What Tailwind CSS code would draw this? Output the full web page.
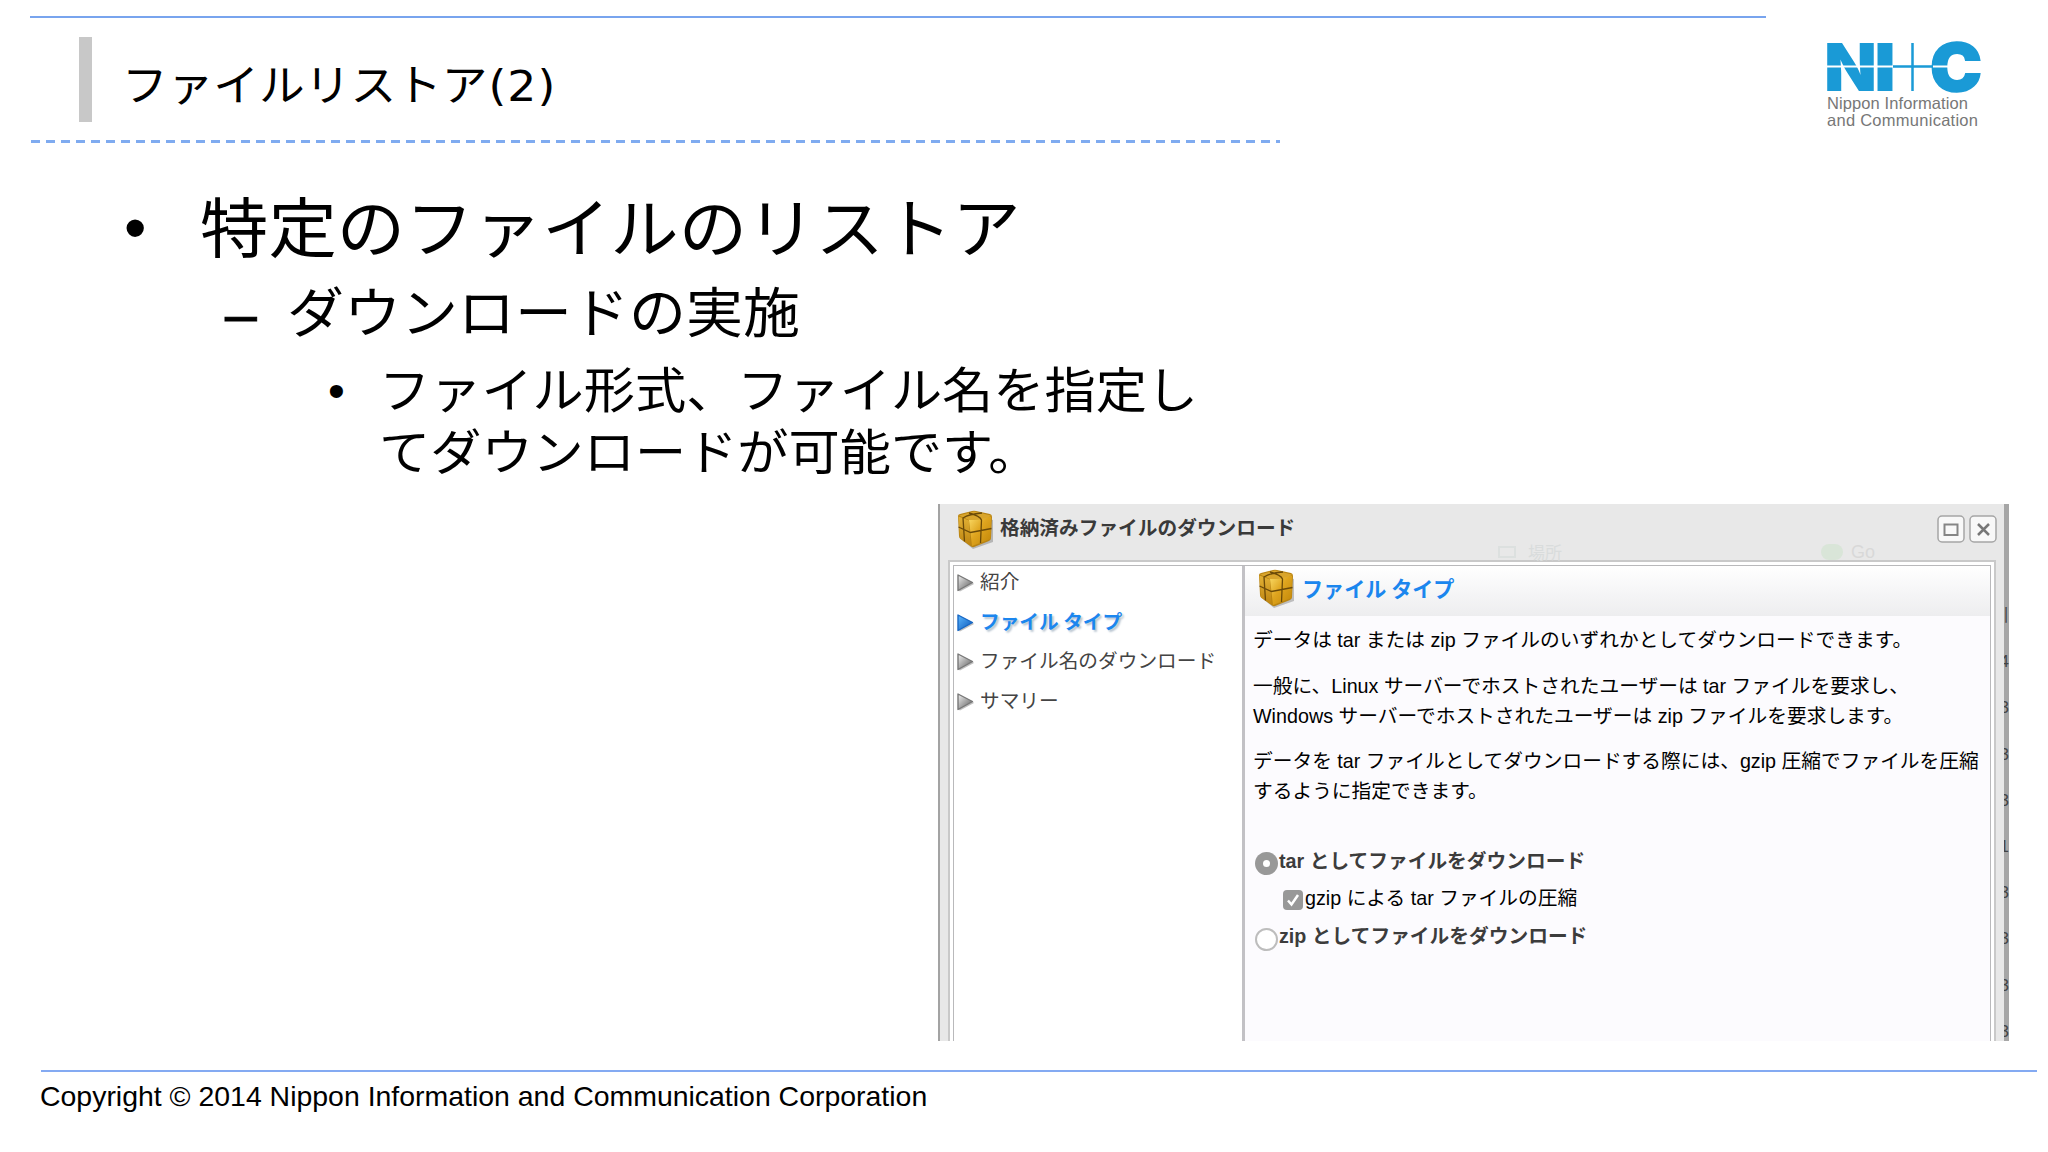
<!DOCTYPE html>
<html lang="ja">
<head>
    <meta charset="UTF-8">
    <meta name="viewport" content="width=device-width, initial-scale=1.0">
    <title>ファイルリストア(2)</title>
    <script src="https://cdn.jsdelivr.net/npm/@tailwindcss/browser@4"></script>
</head>
<body class="bg-white w-[2048px] h-[1152px] overflow-hidden text-black font-['Noto_Sans_CJK_JP',sans-serif]">
    <!-- shared icons -->
    <svg class="absolute size-0">
        <defs>
            <linearGradient id="boxLeft" x1="0" y1="0" x2="0" y2="1">
                <stop offset="0" stop-color="#e2b136"/><stop offset="1" stop-color="#bd8410"/>
            </linearGradient>
            <linearGradient id="boxRight" x1="0" y1="0" x2="1" y2="1">
                <stop offset="0" stop-color="#fbdc68"/><stop offset=".45" stop-color="#dfa51f"/><stop offset="1" stop-color="#c08507"/>
            </linearGradient>
            <linearGradient id="arrowGray" x1="0" y1="0" x2="1" y2="1">
                <stop offset="0" stop-color="#f0f0f0"/><stop offset="1" stop-color="#5a5a5a"/>
            </linearGradient>
            <linearGradient id="arrowBlue" x1="0" y1="0" x2="1" y2="1">
                <stop offset="0" stop-color="#5cb8ff"/><stop offset="1" stop-color="#0a55b8"/>
            </linearGradient>
            <symbol id="package" viewBox="0 0 36 39">
                <path d="M5 30 L16 39 L36 32 L36 10 L30 8z" fill="#000" opacity=".22"/>
                <path d="M1 6 Q1 4.500 3 4 L15 1 Q17 .5 19 1 L33 4 Q35 4.500 35 7 L34 28 Q34 30 32 31 L17 37 Q15.500 37.500 14 36.500 L3.500 29 Q2 28 2 26z" fill="#b98412"/>
                <path d="M2 5.500 L17 1.500 L34 5.500 L30 9 L12 10z" fill="#d9a52c"/>
                <path d="M1.500 6.500 L12 10.500 L13.500 35.500 L3 28z" fill="url(#boxLeft)"/>
                <path d="M12 10 Q24 10 34 6.500 L33.500 29 L15 36z" fill="url(#boxRight)"/>
                <path d="M1.500 17 L13.500 22.500 L34.500 18.500 M23.500 33 L24.500 10 Q23 6 12 3 M7.500 31.500 L6 8 Q12 4 25 3" fill="none" stroke="#6b4a08" stroke-width="1.300"/>
            </symbol>
            <symbol id="arrow" viewBox="0 0 17 18">
                <path d="M3 17.500 L17 10 L15 8 L1 16z" fill="#000" opacity=".25" stroke="none"/>
                <path d="M1 1 L15.500 8.500 L1 16.500z" stroke-width="1.400" stroke-linejoin="round"/>
            </symbol>
        </defs>
    </svg>

    <header>
        <div class="h-4"></div>
        <div class="ml-[30px] w-[1736px] h-[2px] bg-[#78a4ee]"></div>
        <div class="flex h-[122px]">
            <div class="ml-[79px] mt-[19px] w-[13px] h-[85px] bg-[#c8c8c8]"></div>
            <h1 class="ml-[30px] mt-[24px] h-[80px] leading-[80px] text-[45.700px] whitespace-nowrap scale-y-95">ファイルリストア<span class="ml-px tracking-[1px] font-['DejaVu_Sans',sans-serif]">(2)</span></h1>
            <svg class="ml-auto mr-[64px] mt-[18px] w-[164px] h-[96px] overflow-visible" viewBox="1820 36 164 96">
                <g fill="#1a9ad6" font-family="Inter" font-weight="900" font-size="66">
                    <text x="1824" y="91" textLength="53" lengthAdjust="spacingAndGlyphs">N</text>
                    <text x="1874" y="91" textLength="22" lengthAdjust="spacingAndGlyphs">I</text>
                    <text x="1930" y="91" textLength="52" lengthAdjust="spacingAndGlyphs" stroke="#1a9ad6" stroke-width="1.500">C</text>
                </g>
                <path d="M1826 66.500 H1893 M1933 66.500 H1948" stroke="#fff" stroke-width="2"/>
                <path d="M1893 66.500 H1933 M1912.500 43 V91" stroke="#1a9ad6" stroke-width="2.500"/>
                <g fill="#777" font-family="Liberation Sans" font-size="16.500">
                    <text x="1827" y="109" textLength="141">Nippon Information</text>
                    <text x="1827" y="126" textLength="151">and Communication</text>
                </g>
            </svg>
        </div>
        <div class="ml-[31px] w-[1249px] h-[3px] bg-[repeating-linear-gradient(90deg,#7fabf0_0_9px,transparent_9px_15px)]"></div>
    </header>

    <main>
        <ul class="whitespace-nowrap">
            <li class="flex mt-[36px] h-[90px] leading-[90px] text-[68.4px]">
                <span class="ml-[124px] mt-[4px] w-[76px] text-[64px] font-['Liberation_Sans',sans-serif]">•</span>
                <p class="scale-y-95">特定のファイルのリストア</p>
            </li>
            <li class="flex mt-[2px] h-[76px] leading-[76px] text-[57px]">
                <span class="ml-[225px] mt-[5px] w-[62px] font-['Liberation_Sans',sans-serif] [-webkit-text-stroke:1px_black]">–</span>
                <p class="scale-y-95">ダウンロードの実施</p>
            </li>
            <li class="flex mt-[9px] h-[124px] leading-[62px] text-[51.2px]">
                <span class="ml-[328px] mt-[4px] w-[51px] text-[48px] font-['Liberation_Sans',sans-serif]">•</span>
                <div>
                    <p class="scale-y-95">ファイル形式、ファイル名を指定し</p>
                    <p class="scale-y-95">てダウンロードが可能です。</p>
                </div>
            </li>
        </ul>

        <!-- download dialog -->
        <section class="relative ml-[938px] mt-[24px] w-[1071px] h-[537px] bg-[#e8e8e8] border-l-2 border-[#a3a3a3] overflow-hidden text-[19.680px] whitespace-nowrap">
            <div class="flex h-[56px] text-[#3a3a3a]">
                <svg class="ml-[17px] mt-[6px] w-[36px] h-[39px]"><use href="#package"/></svg>
                <h2 class="ml-[7px] h-[46px] leading-[46px] text-[19.7px] font-bold">格納済みファイルのダウンロード</h2>
                <div class="ml-auto mr-[12px] mt-[11px] flex gap-1">
                    <svg class="w-[28px] h-[28px]" viewBox="0 0 28 28">
                        <rect x="1" y="1" width="26" height="26" rx="4" fill="#f8f8f8" stroke="#a5a5a5" stroke-width="1.500"/>
                        <path d="M7.500 9.500 H20.500 V20 H7.500z" fill="none" stroke="#858585" stroke-width="2"/>
                    </svg>
                    <svg class="w-[28px] h-[28px]" viewBox="0 0 28 28">
                        <rect x="1" y="1" width="26" height="26" rx="4" fill="#f8f8f8" stroke="#a5a5a5" stroke-width="1.500"/>
                        <path d="M9 9 L20 20 M20 9 L9 20" stroke="#777" stroke-width="2.500"/>
                    </svg>
                </div>
            </div>

            <!-- page behind shining through the title bar -->
            <div class="absolute left-[558px] top-[39px] flex items-center h-[18px] text-[17px] leading-[18px] text-[#d9dcdc]">
                <span class="w-[18px] h-[12px] border-2 border-[#dce0df] mr-3"></span>場所
            </div>
            <div class="absolute left-[881px] top-[39px] flex items-center h-[18px] text-[18px] leading-[18px] text-[#d8d8d8] font-['Liberation_Sans',sans-serif]">
                <span class="w-[22px] h-[16px] rounded-full bg-[#d9e5d8] mr-2"></span>Go
            </div>

            <div class="ml-[8px] w-[1048px] h-[490px] border-2 border-[#c9c9c9] bg-white p-[3px]">
                <div class="flex h-[490px] border border-[#b9b9bb]">
                    <nav class="w-[288px] text-[#444]">
                        <a class="flex h-[39.700px] leading-[30px]"><svg class="ml-[3px] mt-[8px] w-[17px] h-[18px] fill-[url(#arrowGray)] stroke-[#777]"><use href="#arrow"/></svg><span class="ml-[6px]">紹介</span></a>
                        <a class="flex h-[39.700px] leading-[30px] font-bold text-[#1b86ee]"><svg class="ml-[3px] mt-[8px] w-[17px] h-[18px] fill-[url(#arrowBlue)] stroke-[#1767c4]"><use href="#arrow"/></svg><span class="ml-[6px] [text-shadow:2px_2px_2px_#b8c4d0]">ファイル タイプ</span></a>
                        <a class="flex h-[39.700px] leading-[30px]"><svg class="ml-[3px] mt-[8px] w-[17px] h-[18px] fill-[url(#arrowGray)] stroke-[#777]"><use href="#arrow"/></svg><span class="ml-[6px]">ファイル名のダウンロード</span></a>
                        <a class="flex h-[39.700px] leading-[30px]"><svg class="ml-[3px] mt-[8px] w-[17px] h-[18px] fill-[url(#arrowGray)] stroke-[#777]"><use href="#arrow"/></svg><span class="ml-[6px]">サマリー</span></a>
                    </nav>
                    <div class="flex-1 border-l-3 border-[#c2c1c5] bg-[#fcfbfe]">
                        <div class="flex h-[50px] bg-linear-to-b from-white to-[#ededef]">
                            <svg class="ml-[13px] mt-[3px] w-[36px] h-[39px]"><use href="#package"/></svg>
                            <h3 class="ml-[8px] h-[46px] leading-[45px] text-[21.100px] font-bold text-[#1b86ee]">ファイル タイプ</h3>
                        </div>
                        <div class="ml-[8px] text-[19.730px] leading-[29.500px] font-['Liberation_Sans','Noto_Sans_CJK_JP',sans-serif]">
                            <p class="mt-[10px]">データは tar または zip ファイルのいずれかとしてダウンロードできます。</p>
                            <p class="mt-[16.500px]">一般に、Linux サーバーでホストされたユーザーは tar ファイルを要求し、<br>Windows サーバーでホストされたユーザーは zip ファイルを要求します。</p>
                            <p class="mt-[16px]">データを tar ファイルとしてダウンロードする際には、gzip 圧縮でファイルを圧縮<br>するように指定できます。</p>
                            <div class="mt-[40.500px] flex font-bold text-[#3c3c3c]">
                                <span class="ml-[2px] mt-[5px] mr-px size-[23px] rounded-full bg-[#989898] flex items-center justify-center"><i class="size-[7px] rounded-full bg-white"></i></span>
                                <span>tar としてファイルをダウンロード</span>
                            </div>
                            <div class="mt-[8px] ml-[30px] flex">
                                <svg class="mt-[6px] mr-[2px] w-[20px] h-[20px]" viewBox="0 0 20 20">
                                    <rect width="20" height="20" rx="4" fill="#989898"/>
                                    <path d="M5 10.500 L8.500 14.500 L15 5" fill="none" stroke="#fff" stroke-width="2.500"/>
                                </svg>
                                <span>gzip による tar ファイルの圧縮</span>
                            </div>
                            <div class="mt-[8px] flex font-bold text-[#3c3c3c]">
                                <span class="ml-[2px] mt-[6px] mr-px size-[23px] rounded-full bg-white border-2 border-[#bdbdbd]"></span>
                                <span>zip としてファイルをダウンロード</span>
                            </div>
                        </div>
                    </div>
                </div>
            </div>

            <!-- strip of the page behind the dialog -->
            <div class="absolute right-0 top-0 w-[5px] h-full bg-[#a6a6a6] overflow-hidden">
                <div class="absolute right-0 top-[102px] flex flex-col items-end gap-[26.200px] leading-[20px] text-[17px] text-[#444] font-['Liberation_Sans',sans-serif]">
                    <span>川</span><span>4</span><span>3</span><span>3</span><span>3</span><span>1</span><span>3</span><span>3</span><span>3</span><span>3</span>
                </div>
            </div>
        </section>
    </main>

    <footer class="mt-[29px]">
        <div class="ml-[41px] w-[1996px] h-[2px] bg-[#84aaf2]"></div>
        <p class="ml-[40px] mt-[7px] h-[34px] leading-[34px] text-[28.450px] whitespace-nowrap font-['Liberation_Sans',sans-serif]">Copyright © 2014 Nippon Information and Communication Corporation</p>
    </footer>
</body>
</html>
